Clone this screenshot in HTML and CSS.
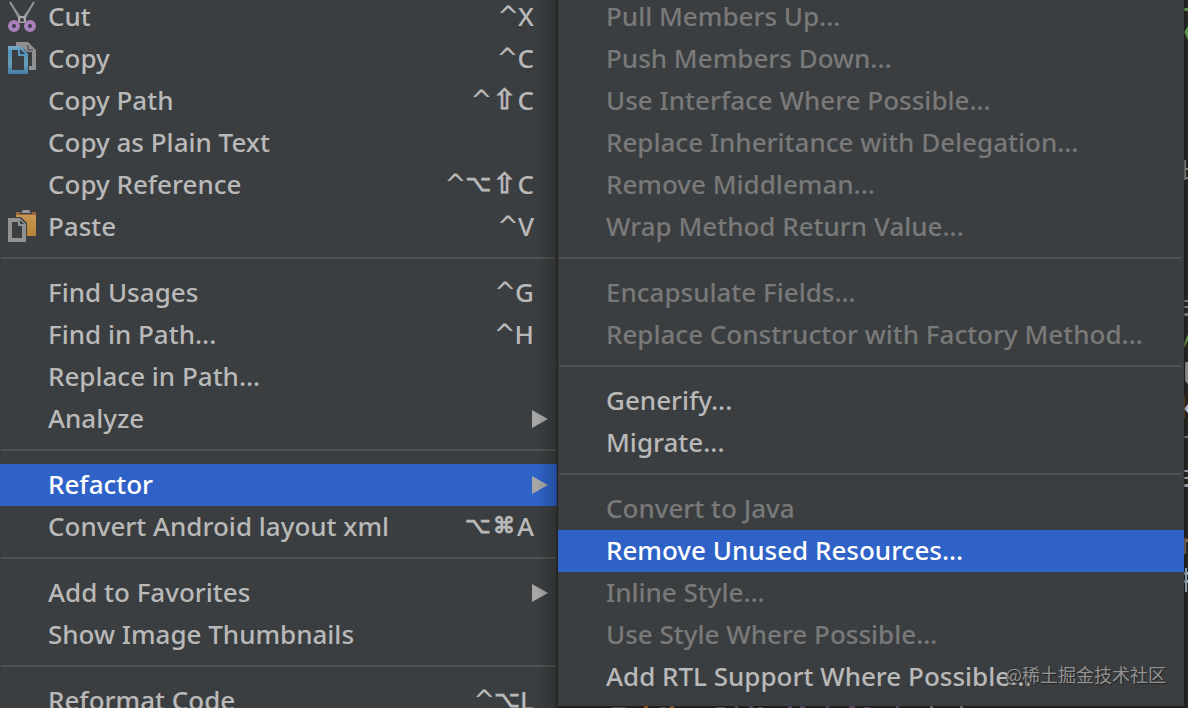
FILE: index.html
```html
<!DOCTYPE html>
<html lang="en">
<head>
<meta charset="utf-8">
<title>Editor context menu</title>
<link rel="stylesheet" href="styles.css">
</head>
<body>
<main class="editor">
  <svg class="code-edge" viewBox="0 0 4 708" aria-hidden="true">
    <path d="M0 8h4v3H0zM4 26L0 32l4 8z" fill="#5e9a50"/>
    <path d="M0 160h2v20H0zM2 168h2v2H2zM2 177h2v2H2z" fill="#8a8580"/>
    <path d="M0 300h4v2H0zM0 306h4v2H0zM0 313h4v3H0z" fill="#85817b"/>
    <path d="M0 344L4 334v6L0 348z" fill="#6a9a50"/>
    <path d="M1 362h3v22l-3-3z" fill="#8b8986"/>
    <path d="M0 396h1v22H0z" fill="#7d4c18"/>
    <path d="M0 409l4-5v9z" fill="#b3bfd0"/>
    <path d="M0 436h4v2H0z" fill="#77736d"/>
    <path d="M0 470h4v2H0zM0 477h4v2H0zM0 484h4v3H0z" fill="#9ca6b5"/>
    <path d="M0 538h2v16H0zM2 539h2v3H2z" fill="#8a6f5c"/>
    <path d="M0 572h4v3H0zM0 580h4v3H0zM1 568h2v24H1z" fill="#8fa9bc"/>
  </svg>
  <svg class="code-bottom" viewBox="0 0 626 2" aria-hidden="true">
    <path d="M86 0h4v2h-4zM112 0h4v2h-4z" fill="#b56a25"/>
    <path d="M54 1h14v1H54zM102 1h6v1h-6zM158 1h9v1h-9z" fill="#665b54"/>
    <path d="M177 0h3v2h-3zM191 0h4v2h-4zM200 1h5v1h-5zM230 0h4v2h-4zM242 0h5v2h-5zM268 0h3v2h-3zM291 0h6v2h-6zM306 1h6v1h-6zM338 0h3v2h-3z" fill="#755580"/>
    <path d="M372 0h3v2h-3zM402 0h3v2h-3z" fill="#828c9b"/>
  </svg>
  <div class="menus">
    <nav class="menu menu-main" aria-label="Edit">
      <button class="item"><span class="icon"><svg viewBox="0 0 28 32"><path d="M2 2l9 18 3-2zM26 2l-9 18-3-2z" fill="#939393"/><path d="M2 2l12 20M26 2L14 22" stroke="#939393" stroke-width="2" fill="none"/><rect x="10" y="16" width="8" height="7" rx="2" fill="#aaa"/><circle cx="14" cy="20" r="2" fill="#3b3e40"/><circle cx="6" cy="26" r="4" fill="none" stroke="#ab80bd" stroke-width="4"/><circle cx="22" cy="26" r="4" fill="none" stroke="#ab80bd" stroke-width="4"/></svg></span><span class="label">Cut</span><kbd><i>^</i>X</kbd></button>
      <button class="item"><span class="icon"><svg viewBox="0 0 28 32"><defs><linearGradient id="blue" x2="0" y2="1"><stop stop-color="#7fa9c4"/><stop offset="0.2" stop-color="#4f94bf"/><stop offset="0.6" stop-color="#679eb5"/><stop offset="1" stop-color="#487fab"/></linearGradient></defs><path d="M8 0h12l8 8v20h-7v-4h3V10h-5L13 4H8z" fill="#8f8f8f"/><path d="M20 3v5h5" fill="none" stroke="#3b3e40" stroke-width="1"/><path d="M0 4h13l7 8v20H0zM4 8v20h12V14h-6V8z" fill="url(#blue)" fill-rule="evenodd"/><path d="M12 7v5h5z" fill="#3b3e40"/></svg></span><span class="label">Copy</span><kbd><i>^</i>C</kbd></button>
      <button class="item"><span class="icon"></span><span class="label">Copy Path</span><kbd><i>^</i><b class="shift">⇧</b>C</kbd></button>
      <button class="item"><span class="icon"></span><span class="label">Copy as Plain Text</span></button>
      <button class="item"><span class="icon"></span><span class="label">Copy Reference</span><kbd><i>^</i><b>⌥</b><b class="shift">⇧</b>C</kbd></button>
      <button class="item"><span class="icon"><svg viewBox="0 0 28 32"><defs><linearGradient id="board" x2="0" y2="1"><stop stop-color="#c89a56"/><stop offset="1" stop-color="#b98436"/></linearGradient></defs><path d="M8 2h20v24H8z" fill="url(#board)"/><path d="M8 2h20v3H8z" fill="#9e6644"/><path d="M12 0h12v4H12z" fill="#3b3e40"/><path d="M15 0h6l2 3H13z" fill="#999"/><path d="M0 7h13l6 6v19H0z" fill="#3b3e40"/><path d="M0 8h12l6 6v18H0zM4 12v16h10V16h-4v-4z" fill="#919191" fill-rule="evenodd"/><path d="M12 10v4h4z" fill="#3b3e40"/></svg></span><span class="label">Paste</span><kbd><i>^</i>V</kbd></button>
      <hr>
      <button class="item"><span class="icon"></span><span class="label">Find Usages</span><kbd><i>^</i>G</kbd></button>
      <button class="item"><span class="icon"></span><span class="label">Find in Path...</span><kbd><i>^</i>H</kbd></button>
      <button class="item"><span class="icon"></span><span class="label">Replace in Path...</span></button>
      <button class="item"><span class="icon"></span><span class="label">Analyze</span><span class="arrow"></span></button>
      <hr>
      <button class="item selected"><span class="icon"></span><span class="label">Refactor</span><span class="arrow"></span></button>
      <button class="item"><span class="icon"></span><span class="label">Convert Android layout xml</span><kbd><b>⌥</b><b>⌘</b>A</kbd></button>
      <hr>
      <button class="item"><span class="icon"></span><span class="label">Add to Favorites</span><span class="arrow"></span></button>
      <button class="item"><span class="icon"></span><span class="label">Show Image Thumbnails</span></button>
      <hr>
      <button class="item"><span class="icon"></span><span class="label">Reformat Code</span><kbd><i>^</i><b>⌥</b>L</kbd></button>
    </nav>
    <nav class="menu menu-sub" aria-label="Refactor">
      <button class="item" disabled>Pull Members Up...</button>
      <button class="item" disabled>Push Members Down...</button>
      <button class="item" disabled>Use Interface Where Possible...</button>
      <button class="item" disabled>Replace Inheritance with Delegation...</button>
      <button class="item" disabled>Remove Middleman...</button>
      <button class="item" disabled>Wrap Method Return Value...</button>
      <hr>
      <button class="item" disabled>Encapsulate Fields...</button>
      <button class="item" disabled>Replace Constructor with Factory Method...</button>
      <hr>
      <button class="item">Generify...</button>
      <button class="item">Migrate...</button>
      <hr>
      <button class="item" disabled>Convert to Java</button>
      <button class="item selected">Remove Unused Resources...</button>
      <button class="item" disabled>Inline Style...</button>
      <button class="item" disabled>Use Style Where Possible...</button>
      <button class="item">Add RTL Support Where Possible...</button>
    </nav>
  </div>
  <span class="watermark">@稀土掘金技术社区</span>
</main>
</body>
</html>
```
FILE: styles.css
```css
* { box-sizing: border-box; }

body {
  margin: 0;
  background: #282623;
  font-family: "Noto Sans", "Open Sans", sans-serif;
}

.editor {
  position: relative;
  height: 100vh;
  overflow: hidden;
}

.menus {
  display: flex;
  align-items: flex-start;
  margin: -4px 4px 0 0;
}

.menu {
  position: relative;
  display: flex;
  flex-direction: column;
  background: #3b3e40;
}

.menu-main {
  flex: 558 1 0;
}

.menu-main::after {
  content: "";
  position: absolute;
  inset: 0 0 0 auto;
  width: 20px;
  background: linear-gradient(to right, transparent, rgba(0, 0, 0, 0.2));
  border-right: 1px solid #2b2c2d;
}

.menu-sub {
  flex: 626 1 0;
  padding-bottom: 8px;
  box-shadow: 0 0 3px #151414;
}

.item {
  display: flex;
  align-items: center;
  height: 42px;
  padding: 0 0 2px;
  border: 0;
  background: none;
  color: #b9b9b9;
  font-family: inherit;
  font-size: 26px;
  font-weight: 500;
  line-height: 40px;
  text-align: left;
  white-space: nowrap;
}

.menu-main .item {
  padding-left: 8px;
  padding-right: 10px;
}

.menu-sub .item {
  padding-left: 48px;
}

.item:disabled {
  color: #797979;
}

.menu .selected {
  background: #2e62c7;
  color: #fff;
}

.icon {
  width: 28px;
  height: 32px;
  margin-right: 12px;
}

.icon svg {
  display: block;
  width: 28px;
  height: 32px;
}

.label {
  flex: 1;
}

kbd {
  display: flex;
  height: 40px;
  padding-right: 14px;
  font: inherit;
}

kbd i,
kbd b {
  display: flex;
  justify-content: center;
  width: 26px;
  font-family: "DejaVu Sans", sans-serif;
  font-style: normal;
  font-weight: 400;
}

kbd i {
  width: 20px;
}

kbd b {
  font-size: 22px;
  -webkit-text-stroke: 1px currentColor;
}

kbd .shift {
  font-size: 28px;
}

.arrow {
  margin-top: 2px;
  border: solid transparent;
  border-width: 9px 0 9px 16px;
  border-left-color: #a6a6a6;
}

hr {
  width: calc(100% - 4px);
  height: 2px;
  margin: 9px 0 13px 1px;
  border: 0;
  background: #515151;
}

.code-edge {
  position: absolute;
  top: 0;
  right: 0;
  width: 4px;
  height: 708px;
}

.code-bottom {
  position: absolute;
  right: 4px;
  bottom: 0;
  width: 626px;
  height: 2px;
}

.watermark {
  position: absolute;
  right: 22px;
  bottom: 22px;
  color: #929292;
  font-family: "Noto Sans CJK SC", sans-serif;
  font-size: 18px;
  line-height: 24px;
  text-shadow: 1px 1px 1px #222;
}
```
